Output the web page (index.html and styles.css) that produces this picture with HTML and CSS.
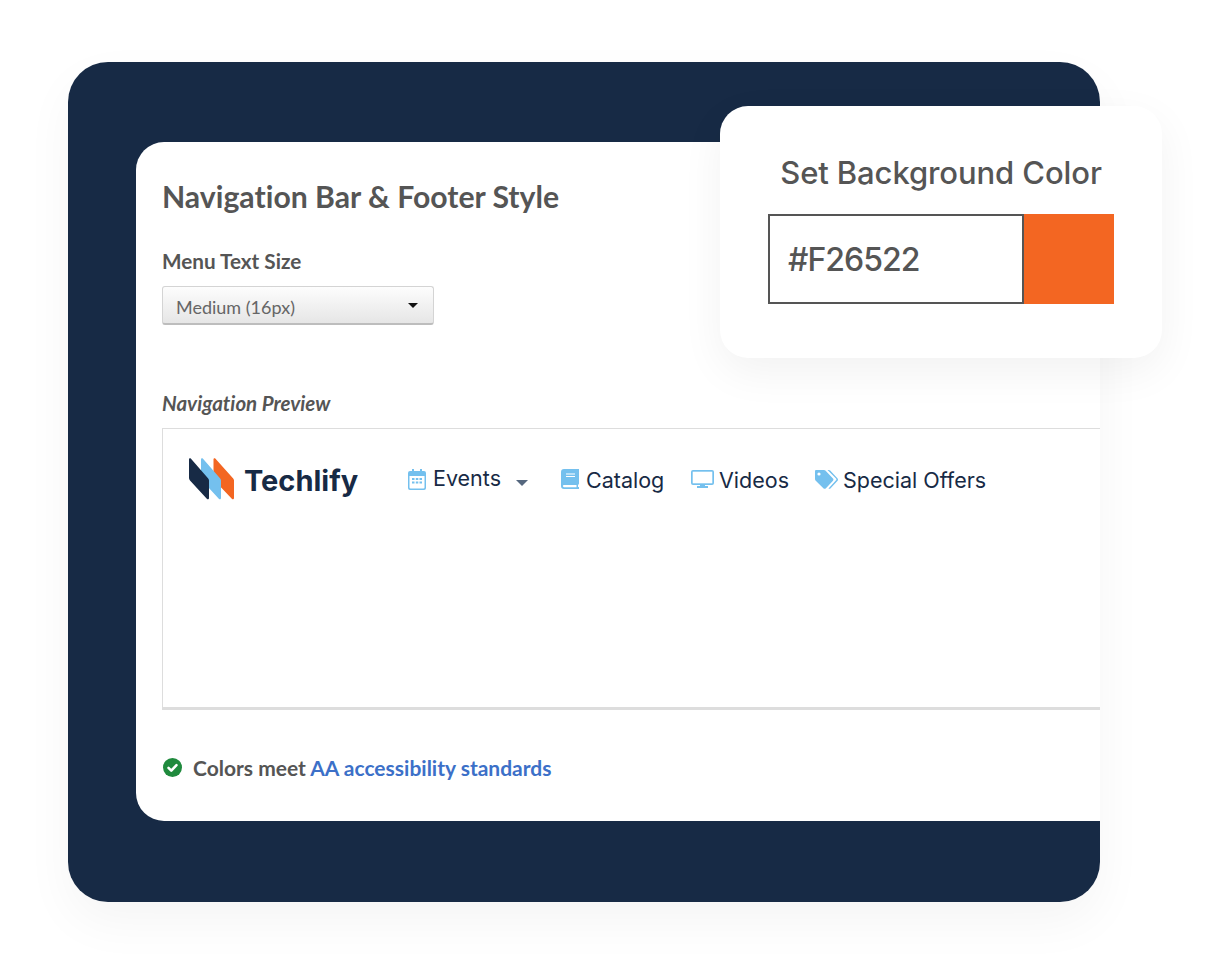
FILE: index.html
```html
<!DOCTYPE html>
<html lang="en">
<head>
<meta charset="utf-8">
<title>Navigation Bar &amp; Footer Style</title>
<link rel="stylesheet" href="styles.css">
</head>
<body>
<main class="panel">
  <section class="card">
    <h1 class="title">Navigation Bar &amp; Footer Style</h1>
    <div class="label">Menu Text Size</div>
    <div class="select">
      <span>Medium (16px)</span>
      <i class="select-caret"></i>
    </div>
    <div class="preview-label">Navigation Preview</div>
    <div class="preview">
      <nav class="nav">
        <div class="brand">
          <svg class="brand-mark" width="46" height="42" viewBox="0 0 46 42">
            <path fill="#F36622" d="M24.500 1.500c0-1.200 1.200-1.600 2-.7l17.700 19.600c.5.6.8 1.300.8 2.100V40c0 1.400-1.300 1.800-2.200.8L25.500 22.500c-.6-.7-1-1.500-1-2.400z"/>
            <path fill="#74C0EE" d="M12 1.500c0-1.200 1.200-1.600 2-.7l17.200 19.600c.5.6.8 1.300.8 2.100V40c0 1.400-1.300 1.800-2.200.8L13 22.500c-.6-.7-1-1.500-1-2.400z"/>
            <path fill="#172A45" d="M0 1.500C0 .3 1.200-.1 2 .8l17.200 19.600c.5.6.8 1.300.8 2.100V40c0 1.400-1.300 1.800-2.200.8L1 22.500c-.6-.7-1-1.500-1-2.400z"/>
          </svg>
          <span class="brand-name">Techlify</span>
        </div>
        <div class="nav-item nav-events">
          <svg width="18" height="21" viewBox="0 0 18 21"><path fill="#74C0EE" d="M4 0h2v2h6V0h2v2h2a2 2 0 0 1 2 2v15a2 2 0 0 1-2 2H2a2 2 0 0 1-2-2V4a2 2 0 0 1 2-2h2z"/><path fill="#fff" d="M1.500 7h15v11.500a1 1 0 0 1-1 1h-13a1 1 0 0 1-1-1z"/><path fill="#74C0EE" d="M4 9h2.500v2H4zm3.800 0h2.500v2H7.800zm3.700 0H14v2h-2.500zM4 12.500h2.500v2H4zm3.800 0h2.500v2H7.800zm3.700 0H14v2h-2.500z"/></svg>
          <span class="nav-text nav-text-raised">Events</span>
          <i class="nav-caret"></i>
        </div>
        <div class="nav-item nav-catalog">
          <svg width="18" height="20" viewBox="0 0 18 20"><path fill="#74C0EE" d="M3 0h15v14.500a1.500 1.500 0 0 1-1 1.400V18h1v2H3a3 3 0 0 1-3-3V3a3 3 0 0 1 3-3z"/><path fill="#fff" d="M5 4.500h9v1H5zm0 2.500h9v1H5zM3 16h12.500v2.200H3a1.100 1.100 0 0 1 0-2.200z"/></svg>
          <span class="nav-text">Catalog</span>
        </div>
        <div class="nav-item nav-videos">
          <svg width="23" height="18" viewBox="0 0 23 18"><path fill="#74C0EE" d="M2 0h19a2 2 0 0 1 2 2v11a2 2 0 0 1-2 2h-7v1h3v2H6v-2h3v-1H2a2 2 0 0 1-2-2V2a2 2 0 0 1 2-2z"/><path fill="#fff" d="M1.700 1.700h19.600v11.600H1.700z"/></svg>
          <span class="nav-text">Videos</span>
        </div>
        <div class="nav-item nav-offers">
          <svg width="23" height="19" viewBox="0 0 23 19"><path fill="#74C0EE" d="M1 0h8c.6 0 1 .2 1.400.6l7.600 8c.6.6.6 1.500 0 2.100l-7.300 7.700c-.6.600-1.500.6-2.100 0L.5 10.400C.2 10 0 9.600 0 9.100V1a1 1 0 0 1 1-1z"/><circle cx="4" cy="4" r="1.600" fill="#fff"/><path fill="#74C0EE" d="M12.500 0h1.300c.6 0 1 .2 1.400.6l7.400 8c.5.600.5 1.500 0 2.100l-7.200 7.700c-.5.500-1.200.6-1.900.2l7.500-8.300c.5-.5.500-1.300 0-1.800z"/></svg>
          <span class="nav-text">Special Offers</span>
        </div>
      </nav>
    </div>
    <div class="status">
      <svg width="19" height="19" viewBox="0 0 19 19"><circle cx="9.500" cy="9.500" r="9.500" fill="#1F8A3D"/><path fill="none" stroke="#fff" stroke-width="2.600" stroke-linecap="round" stroke-linejoin="round" d="M5.500 9.800l2.800 2.800 5.200-5.400"/></svg>
      <span class="status-text">Colors meet <a class="status-link">AA accessibility standards</a></span>
    </div>
  </section>
  <aside class="popup">
    <h2 class="popup-title">Set Background Color</h2>
    <div class="color-row">
      <div class="color-input">#F26522</div>
      <div class="color-swatch"></div>
    </div>
  </aside>
</main>
</body>
</html>
```

FILE: styles.css
```css
* { box-sizing: border-box; }
html, body { margin: 0; background: #fff; }
body {
  width: 1230px;
  height: 976px;
  padding: 62px 130px 74px 68px;
  overflow: hidden;
  font-family: "Lato", sans-serif;
  font-variant-ligatures: none;
  color: #555;
}
.panel {
  position: relative;
  width: 1032px;
  height: 840px;
  padding: 80px 0 81px 68px;
  background: #172A45;
  border-radius: 40px;
  box-shadow: 0 20px 50px rgba(0, 0, 0, 0.045);
}
.card {
  height: 679px;
  padding: 36px 0 0 26px;
  background: #fff;
  border-radius: 28px 0 0 28px;
  display: flex;
  flex-direction: column;
}
.title {
  margin: 0;
  font-size: 30.2px;
  line-height: 36px;
  font-weight: 700;
}
.label {
  margin-top: 35px;
  font-size: 20.7px;
  line-height: 24px;
  font-weight: 700;
}
.select {
  margin-top: 13px;
  width: 272px;
  height: 39px;
  padding: 3px 15px 0 13px;
  display: flex;
  align-items: center;
  justify-content: space-between;
  font-size: 18px;
  color: #666;
  border: 1px solid #d4d4d4;
  border-bottom: 2px solid #bdbdbd;
  border-radius: 3px;
  background: linear-gradient(#fdfdfd, #e6e6e6);
}
.select-caret {
  width: 0;
  height: 0;
  margin-top: -2px;
  border-left: 5px solid transparent;
  border-right: 5px solid transparent;
  border-top: 5px solid #111;
}
.preview-label {
  margin-top: 66px;
  font-size: 20.5px;
  line-height: 24px;
  font-weight: 700;
  font-style: italic;
}
.preview {
  margin-top: 13px;
  height: 282px;
  border: 1px solid #ddd;
  border-right: 0;
  border-bottom: 3px solid #ddd;
}
.nav {
  display: flex;
  align-items: center;
  padding: 29px 0 0 26px;
  height: 71px;
}
.brand { display: flex; align-items: center; gap: 9px; width: 219px; }
.brand-mark { flex: none; }
.brand-name {
  margin-top: 2px;
  font-family: "Inter", sans-serif;
  font-size: 29px;
  font-weight: 700;
  color: #172A45;
}
.nav-item {
  display: flex;
  align-items: center;
  font-family: "Inter", sans-serif;
  font-size: 21.5px;
  color: #172A45;
}
.nav-item svg { flex: none; }
.nav-text { margin-top: 1px; }
.nav-text-raised { margin-top: -2px; }
.nav-events { gap: 7px; width: 153px; }
.nav-catalog { gap: 7px; width: 130px; }
.nav-videos { gap: 5px; width: 124px; }
.nav-offers { gap: 5px; }
.nav-caret {
  margin: 8px 0 0 8px;
  width: 0;
  height: 0;
  border-left: 6px solid transparent;
  border-right: 6px solid transparent;
  border-top: 6px solid #55677e;
}
.status {
  margin-top: 45px;
  display: flex;
  align-items: center;
  gap: 11px;
  padding-left: 1px;
  font-size: 21px;
  font-weight: 700;
}
.status-link { color: #3C70C8; }
.popup {
  position: absolute;
  left: 652px;
  top: 44px;
  width: 442px;
  height: 252px;
  padding: 46px 48px 0;
  background: #fff;
  border-radius: 28px;
  box-shadow: 0 14px 44px rgba(0, 0, 0, 0.055);
}
.popup-title {
  margin: 0;
  text-align: center;
  font-family: "Inter", sans-serif;
  font-size: 31px;
  line-height: 42px;
  font-weight: 500;
  letter-spacing: -0.1px;
}
.color-row { margin-top: 20px; display: flex; height: 90px; }
.color-input {
  width: 256px;
  padding-left: 18px;
  display: flex;
  align-items: center;
  font-family: "Inter", sans-serif;
  font-size: 32px;
  font-weight: 500;
  letter-spacing: -1px;
  border: 2px solid #555;
}
.color-swatch { flex: 1; background: #F36622; }
```
